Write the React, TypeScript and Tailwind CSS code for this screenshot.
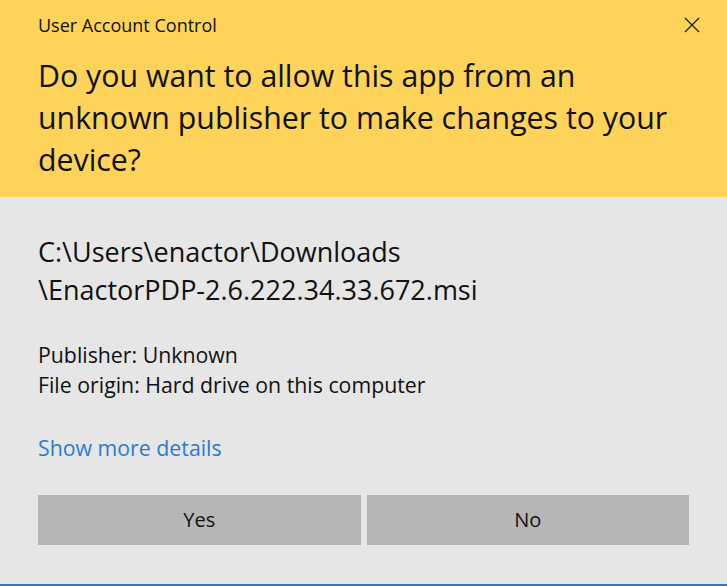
export default function App() {
  const font = { fontFamily: '"Open Sans", "Noto Sans", sans-serif' };
  return (
    <div
      className="w-[727px] h-[586px] flex flex-col bg-[#e6e6e6] border-b-2 border-[#2b79c9] text-[#111]"
      style={font}
    >
      <div className="h-[197px] shrink-0 bg-[#fdd35a] pl-[38px] pr-[20px] pt-[13px] relative">
        <div className="text-[18px] leading-[24px]">User Account Control</div>
        <button className="absolute right-[27px] top-[17px] w-[16px] h-[16px]">
          <svg viewBox="0 0 16 16" className="w-[16px] h-[16px]" fill="none" stroke="#222" strokeWidth="1.4">
            <path d="M1 1 L15 15 M15 1 L1 15" />
          </svg>
        </button>
        <div className="mt-[18px] text-[30.3px] leading-[42px] w-[680px] whitespace-nowrap">
          Do you want to allow this app from an
          <br />
          unknown publisher to make changes to your
          <br />
          device?
        </div>
      </div>
      <div className="flex flex-col pl-[38px] pr-[38px] pt-[36px]">
        <div className="text-[27px] leading-[38px] whitespace-nowrap">
          C:\Users\enactor\Downloads
          <br />
          \EnactorPDP-2.6.222.34.33.672.msi
        </div>
        <div className="mt-[31px] text-[21.3px] leading-[30px] whitespace-nowrap">
          <div>Publisher: Unknown</div>
          <div>File origin: Hard drive on this computer</div>
        </div>
        <div className="mt-[33px] text-[21.3px] leading-[30px] text-[#2a7ccf]">Show more details</div>
        <div className="mt-[32px] grid grid-cols-2 gap-[6px] w-[651px]">
          <button className="h-[50px] bg-[#b6b6b6] text-[20px]">Yes</button>
          <button className="h-[50px] bg-[#b6b6b6] text-[20px]">No</button>
        </div>
      </div>
    </div>
  );
}
